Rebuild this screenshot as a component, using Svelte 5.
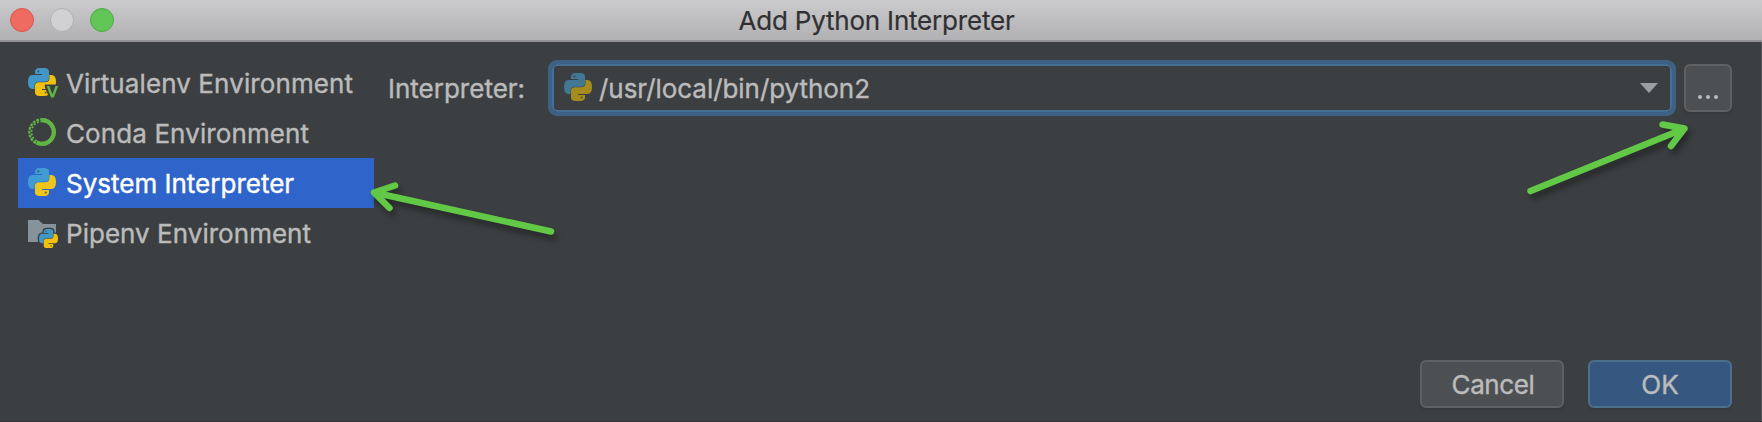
<script>
  const environments = [
    { name: 'Virtualenv Environment', kind: 'virtualenv', spacing: 0.1 },
    { name: 'Conda Environment', kind: 'conda', spacing: 0.1 },
    { name: 'System Interpreter', kind: 'system', spacing: 0 },
    { name: 'Pipenv Environment', kind: 'pipenv', spacing: 0.03 }
  ];
  let selected = $state('system');

  const lobe =
    'M7 6V3.8Q7 0 11.5 0H16.5Q21 0 21 3.8V10Q21 13.7 17 13.7H11Q6.6 13.7 6.6 17.8V21H4.5Q0 21 0 14Q0 7 4.5 7H14V6Z';
</script>

{#snippet python()}
  <path class="blue" d={lobe} />
  <circle class="eye" cx="10.3" cy="3.4" r="1.1" />
  <g transform="rotate(180 14 14)">
    <path class="yellow" d={lobe} />
    <circle class="eye" cx="10.3" cy="3.4" r="1.1" />
  </g>
{/snippet}

<div class="dialog">
  <header>
    <div class="lights"><i class="close"></i><i class="minimise"></i><i class="zoom"></i></div>
    <h1>Add Python Interpreter</h1>
  </header>

  <main>
    <ul>
      {#each environments as env}
        <li>
          <button class="env {env.kind}" class:selected={selected === env.kind} onclick={() => (selected = env.kind)}>
            <svg class="icon" viewBox="0 0 28 28">
              {#if env.kind === 'conda'}
                <path d="M14 2.2A11.8 11.8 0 1 1 8.5 24.4" fill="none" stroke="#62b543" stroke-width="4.2" />
                <circle cx="14" cy="14" r="12.7" fill="none" stroke="#62b543" stroke-width="2.2" stroke-dasharray="2.8 1.1" stroke-dashoffset="1" />
                <circle cx="14" cy="14" r="10.6" fill="none" stroke="#62b543" stroke-width="1.9" stroke-dasharray="2 1.7" />
              {:else if env.kind === 'pipenv'}
                <path d="M0 2H10.5L15 6H28V24H0Z" fill="#87939a" />
                <g transform="translate(11 11) scale(.68)">
                  <path class="halo" d={lobe} />
                  <path class="halo" d={lobe} transform="rotate(180 14 14)" />
                  {@render python()}
                </g>
              {:else}
                {@render python()}
                {#if env.kind === 'virtualenv'}
                  <path d="M16.8 16.4H31V30H21.3L16.8 19Z" fill="#3c3f41" />
                  <path d="M18.6 18H21.3L24.4 26.4L27.5 18H30.2L25.8 29.6H23Z" fill="#62b543" />
                {/if}
              {/if}
            </svg>
            <span style:letter-spacing="{env.spacing}px">{env.name}</span>
          </button>
        </li>
      {/each}
    </ul>

    <div class="field">
      <span class="label">Interpreter:</span>
      <div class="combo">
        <svg class="icon dim" viewBox="0 0 28 28">{@render python()}</svg>
        <span class="path">/usr/local/bin/python2</span>
        <svg class="caret" viewBox="0 0 18 10"><path d="M0 0H18L9 10Z" fill="#9c9fa1" /></svg>
      </div>
      <button class="push browse" aria-label="Browse"><i></i><i></i><i></i></button>
    </div>
  </main>

  <footer>
    <button class="push"><span class="cancel">Cancel</span></button>
    <button class="push primary"><span class="ok">OK</span></button>
  </footer>

  <svg class="arrows" viewBox="0 0 1762 422">
    <path d="M551 231.5L374 192.5M395 185.5L374 192.5L389.5 208" />
    <path d="M1530.5 191L1684.5 128.5M1662.5 124.5L1684.5 128.5L1671 146" />
  </svg>
</div>

<style>
  :global(body) { margin: 0; background: #3c3f41; }
  .dialog {
    position: relative;
    box-sizing: border-box;
    width: 1762px;
    height: 422px;
    display: flex;
    flex-direction: column;
    background: #3c3f41;
    border-bottom: 1px solid #353436;
    box-shadow: inset -1px 0 #55585a;
    font: 400 26px/30px Inter, sans-serif;
    -webkit-text-stroke: 0.4px currentColor;
    color: #bbbbbb;
    overflow: hidden;
  }
  header {
    box-sizing: border-box;
    height: 42px;
    flex: none;
    display: grid;
    grid-template-columns: 1fr auto 1fr;
    align-items: center;
    background: linear-gradient(#cbcacc, #b1b0b2);
    border-bottom: 2px solid #929294;
  }
  .lights { display: flex; gap: 16px; padding-left: 10px; }
  .lights i { box-sizing: border-box; width: 24px; height: 24px; border-radius: 50%; border: 1px solid; }
  .close { background: #ee6b60; border-color: #d9564d !important; }
  .minimise { background: #d1d0d2; border-color: #b0afb1 !important; }
  .zoom { background: #61c655; border-color: #50a847 !important; }
  h1 { margin: 2px 0 0; font: inherit; color: #303032; letter-spacing: -0.2px; grid-column: 2; padding-right: 9px; -webkit-text-stroke-width: 0.2px; }
  main { display: flex; flex: 1; padding-left: 18px; }
  ul { list-style: none; width: 356px; margin: 16px 0 0; padding: 0; }
  button { font: inherit; color: inherit; border: 0; margin: 0; cursor: default; }
  .env {
    width: 100%;
    height: 50px;
    padding: 0 0 0 10px;
    display: flex;
    align-items: center;
    gap: 10px;
    background: none;
    text-align: left;
    white-space: nowrap;
  }
  .env span { padding-top: 1px; }
  .env.selected { background: #2f65ca; color: #fff; }
  .icon { width: 28px; height: 28px; flex: none; overflow: visible; margin-top: -2px; }
  .blue { fill: #4297c9; }
  .yellow { fill: #f1c00c; }
  .selected .blue { fill: #409bd4; }
  .selected .yellow { fill: #edc51c; }
  .eye { fill: #3c3f41; opacity: 0.65; }
  .halo { fill: #3c3f41; stroke: #3c3f41; stroke-width: 4; }
  .dim .blue { fill: #417994; }
  .dim .yellow { fill: #a68c1f; }
  .field { display: flex; align-items: center; height: 56px; margin: 18px 0 0 14px; }
  .label { width: 154px; padding-top: 2px; }
  .combo {
    box-sizing: border-box;
    width: 1128px;
    margin-left: 6px;
    height: 56px;
    display: flex;
    align-items: center;
    border: 4px solid #3d6185;
    border-radius: 9px;
    box-shadow: inset 0 0 0 2px #466d94;
    padding: 0 14px 0 12px;
    gap: 7px;
  }
  .path { flex: 1; padding-top: 2px; letter-spacing: -0.05px; }
  .caret { width: 18px; height: 10px; }
  .push {
    box-sizing: border-box;
    width: 144px;
    height: 48px;
    display: flex;
    align-items: center;
    justify-content: center;
    padding: 0;
    background: #4c5052;
    border: 2px solid #5e6162;
    border-radius: 6px;
    box-shadow: 0 2px 1px #37393b;
  }
  .push span { padding-top: 2px; }
  .cancel { letter-spacing: -0.4px; padding-left: 2px; }
  .primary { background: #365880; border-color: #4c708c; }
  .browse { width: 48px; margin-left: 8px; gap: 4px; padding-top: 17px; }
  .browse i { width: 4px; height: 4px; border-radius: 50%; background: #bbbbbb; }
  footer { display: flex; justify-content: flex-end; gap: 24px; padding: 0 30px 13px 0; }
  .arrows { position: absolute; inset: 0; width: 1762px; height: 422px; pointer-events: none; filter: drop-shadow(3px 5px 3px rgba(0, 0, 0, 0.4)); }
  .arrows path { fill: none; stroke: #62c946; stroke-width: 6.5; stroke-linecap: round; stroke-linejoin: round; }
</style>
